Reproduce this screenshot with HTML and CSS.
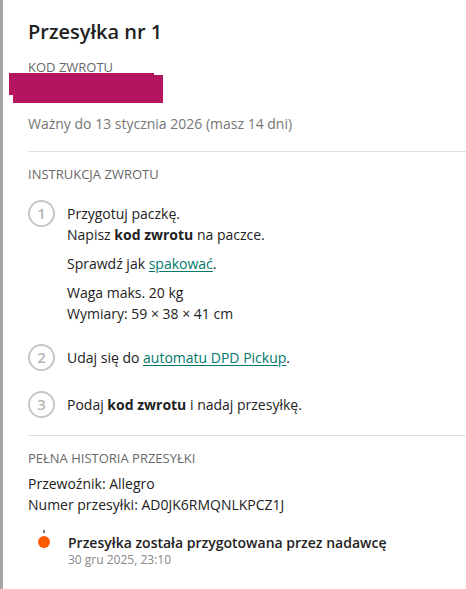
FILE: index.html
```html
<!DOCTYPE html>
<html lang="pl">
<head>
<meta charset="utf-8">
<title>Przesyłka nr 1</title>
<link rel="stylesheet" href="styles.css">
</head>
<body>
<div class="panel">
  <section class="head">
    <h1 class="title">Przesyłka nr 1</h1>
    <div class="label label-code">KOD ZWROTU</div>
    <div class="code"><span class="redact"></span></div>
    <p class="valid">Ważny do 13 stycznia 2026 (masz 14 dni)</p>
  </section>
  <hr class="divider">
  <section class="section">
    <h2 class="label">INSTRUKCJA ZWROTU</h2>
    <ol class="steps">
      <li class="step">
        <span class="num">1</span>
        <div class="step-body">
          <p class="para">Przygotuj paczkę.<br>Napisz <b>kod zwrotu</b> na paczce.</p>
          <p class="para">Sprawdź jak <a class="link" href="#">spakować</a>.</p>
          <p class="para">Waga maks. 20 kg<br>Wymiary: 59 × 38 × 41 cm</p>
        </div>
      </li>
      <li class="step">
        <span class="num">2</span>
        <div class="step-body">
          <p class="para">Udaj się do <a class="link" href="#">automatu DPD Pickup</a>.</p>
        </div>
      </li>
      <li class="step">
        <span class="num">3</span>
        <div class="step-body">
          <p class="para">Podaj <b>kod zwrotu</b> i nadaj przesyłkę.</p>
        </div>
      </li>
    </ol>
  </section>
  <hr class="divider">
  <section class="section">
    <h2 class="label">PEŁNA HISTORIA PRZESYŁKI</h2>
    <p class="meta">Przewoźnik: Allegro<br>Numer przesyłki: AD0JK6RMQNLKPCZ1J</p>
    <div class="event">
      <div class="marker"><span class="tick"></span><span class="dot"></span></div>
      <div class="event-body">
        <div class="event-title">Przesyłka została przygotowana przez nadawcę</div>
        <div class="event-date">30 gru 2025, 23:10</div>
      </div>
    </div>
  </section>
</div>
</body>
</html>
```
FILE: styles.css
```css
* { box-sizing: border-box; }
html, body { margin: 0; padding: 0; background: #fff; }
body {
  font-family: "Open Sans", "Noto Sans", sans-serif;
  color: #222;
  font-size: 14px;
  line-height: 21px;
}
.panel {
  min-height: 100vh;
  border-left: 3px solid #a6a6a6;
  padding-left: 25px;
  padding-top: 18px;
}
.title {
  margin: 0;
  font-size: 20px;
  line-height: 28px;
  font-weight: 600;
  color: #222;
}
.label {
  margin: 0;
  font-size: 13px;
  line-height: 18px;
  font-weight: 400;
  color: #686868;
}
.label-code {
  margin-top: 13px;
  line-height: 16px;
}
.code {
  position: relative;
  height: 28px;
  margin-bottom: 11px;
}
.redact::before,
.redact::after {
  content: "";
  position: absolute;
  background: #b3155f;
}
.redact::before { left: -19px; top: -2px; width: 145px; height: 22px; }
.redact::after { left: -15px; top: 0; width: 150px; height: 28px; }
.valid {
  margin: 0;
  font-size: 14px;
  line-height: 20px;
  color: #767676;
}
.divider {
  border: 0;
  border-top: 1px solid #dedede;
  margin: 17px 0 0;
}
.section { padding-top: 13px; }
.steps {
  list-style: none;
  margin: 17px 0 0;
  padding: 0;
  display: flex;
  flex-direction: column;
  gap: 20px;
}
.step {
  display: flex;
  align-items: flex-start;
  gap: 12px;
}
.num {
  flex: none;
  width: 27px;
  height: 27px;
  border: 2px solid #c6c6c6;
  border-radius: 50%;
  color: #b5b5b5;
  font-size: 15px;
  line-height: 23px;
  text-align: center;
  font-weight: 600;
}
.step-body { padding-top: 3px; }
.para { margin: 0 0 8px; }
.para:last-child { margin-bottom: 0; }
.para b { font-weight: 700; }
.link { color: #00796b; text-decoration: underline; text-underline-offset: 2px; }
.meta { margin: 6px 0 0; }
.event {
  display: flex;
  margin-top: 19px;
}
.marker {
  width: 32px;
  margin-right: 8px;
  display: flex;
  flex-direction: column;
  align-items: center;
  flex: none;
}
.tick { width: 2px; height: 3px; background: #777; margin-top: -4px; }
.dot { width: 12px; height: 12px; border-radius: 50%; background: #ff5a00; margin-top: 3px; }
.event-title { font-size: 14px; line-height: 18px; font-weight: 600; color: #222; }
.event-date { font-size: 12px; line-height: 16px; color: #888; }
```
